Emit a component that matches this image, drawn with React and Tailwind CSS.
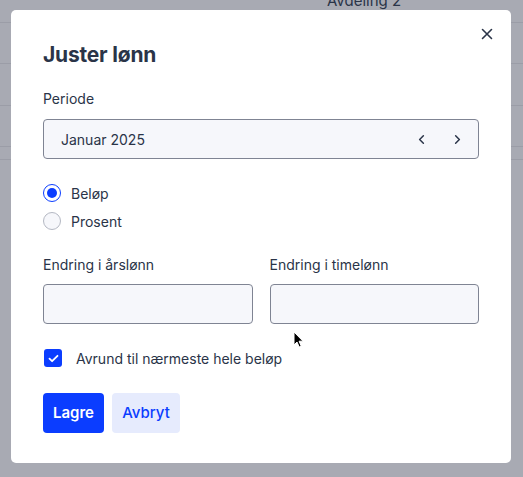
import React from "react";

const font = { fontFamily: "Inter, 'Noto Sans', sans-serif" };

function Chevron({ dir }) {
  return (
    <svg width="15" height="15" viewBox="0 0 24 24" fill="none" stroke="#2a3448" strokeWidth="2.4" strokeLinecap="round" strokeLinejoin="round">
      {dir === "left" ? <path d="M15 6l-6 6 6 6" /> : <path d="M9 6l6 6-6 6" />}
    </svg>
  );
}

export default function App() {
  return (
    <div className="relative w-[523px] h-[477px] overflow-hidden bg-[#a8aab3]" style={font}>
      {/* background table rows */}
      <div className="flex flex-col">
        <div className="h-[23px] border-b border-[#9b9da7] relative">
          <span className="absolute left-[327px] top-[-8px] text-[15px] leading-[18px] text-[#2a3448]">Avdeling 2</span>
        </div>
        <div className="h-[41px] border-b border-[#9b9da7]" />
        <div className="h-[42px] border-b border-[#9b9da7]" />
        <div className="h-[41px] border-b border-[#9b9da7]" />
        <div className="h-[13px] border-b border-[#9b9da7]" />
      </div>

      {/* modal */}
      <div className="absolute left-[11px] top-[10px] w-[500px] h-[453px] bg-white rounded-[5px] px-[32px] pt-[31px]">
        <button className="absolute right-[18px] top-[18px] w-[12px] h-[12px] flex items-center justify-center">
          <svg width="12" height="12" viewBox="0 0 12 12" stroke="#2a3448" strokeWidth="1.6" strokeLinecap="round">
            <path d="M1.5 1.5l9 9M10.5 1.5l-9 9" />
          </svg>
        </button>
        <h2 className="text-[21px] font-bold text-[#2a3448] leading-[28px] tracking-[-0.2px]">Juster lønn</h2>

        <div className="mt-[20px] text-[14px] text-[#2a3448] leading-[20px]">Periode</div>
        <div className="mt-[10px] h-[40px] border border-[#7f8493] rounded-[4px] bg-[#f6f7fb] flex items-center pl-[17px] pr-[13px]">
          <span className="flex-1 text-[14px] text-[#2a3448]">Januar 2025</span>
          <div className="flex items-center gap-[21px]">
            <Chevron dir="left" />
            <Chevron dir="right" />
          </div>
        </div>

        <div className="mt-[25px] flex flex-col gap-[10px]">
          <label className="flex items-center gap-[10px] h-[18px]">
            <span className="w-[18px] h-[18px] rounded-full border-[1.5px] border-[#0b3dff] flex items-center justify-center">
              <span className="w-[10px] h-[10px] rounded-full bg-[#0b3dff]" />
            </span>
            <span className="text-[14px] text-[#2a3448]">Beløp</span>
          </label>
          <label className="flex items-center gap-[10px] h-[18px]">
            <span className="w-[18px] h-[18px] rounded-full border border-[#b4b8c3] bg-[#f6f7fb]" />
            <span className="text-[14px] text-[#2a3448]">Prosent</span>
          </label>
        </div>

        <div className="mt-[25px] grid grid-cols-2 gap-[17px]">
          <div>
            <div className="text-[14px] text-[#2a3448] leading-[20px]">Endring i årslønn</div>
            <div className="mt-[9px] h-[40px] border border-[#7f8493] rounded-[4px] bg-[#f6f7fb]" />
          </div>
          <div>
            <div className="text-[14px] text-[#2a3448] leading-[20px]">Endring i timelønn</div>
            <div className="mt-[9px] h-[40px] border border-[#7f8493] rounded-[4px] bg-[#f6f7fb]" />
          </div>
        </div>

        <label className="mt-[25px] flex items-center gap-[14px] h-[18px] pl-[1px]">
          <span className="w-[18px] h-[18px] rounded-[3px] bg-[#0b3dff] flex items-center justify-center">
            <svg width="11" height="9" viewBox="0 0 11 9" fill="none" stroke="white" strokeWidth="1.8" strokeLinecap="round" strokeLinejoin="round">
              <path d="M1.5 4.7l2.6 2.5L9.5 1.8" />
            </svg>
          </span>
          <span className="text-[14px] text-[#2a3448]">Avrund til nærmeste hele beløp</span>
        </label>

        <div className="mt-[26px] flex gap-[8px]">
          <button className="h-[40px] w-[61px] rounded-[4px] bg-[#0b3dff] text-white text-[15px] font-semibold">Lagre</button>
          <button className="h-[40px] w-[68px] rounded-[4px] bg-[#e6ebfd] text-[#0b3dff] text-[15px] font-medium">Avbryt</button>
        </div>
      </div>

      {/* mouse cursor */}
      <svg className="absolute left-[293px] top-[331px]" width="11" height="17" viewBox="0 0 11 17">
        <path d="M1 1v13l3-3 2.2 5 2-0.9-2.1-4.9H10z" fill="black" stroke="white" strokeWidth="1" />
      </svg>
    </div>
  );
}
